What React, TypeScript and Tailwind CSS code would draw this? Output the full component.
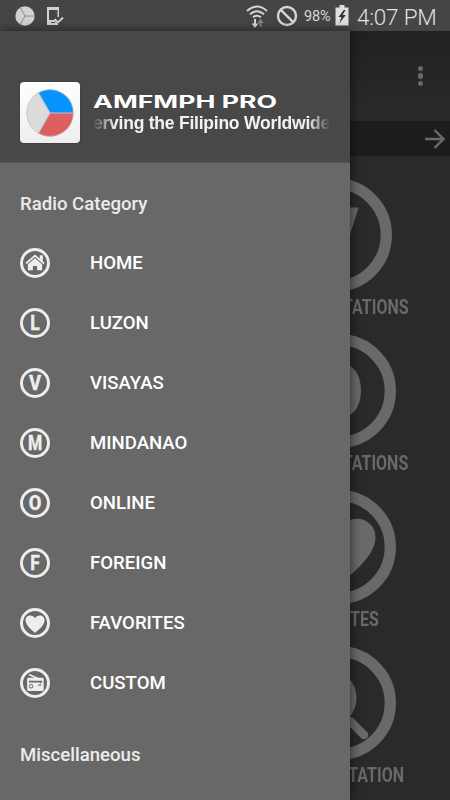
import React from 'react';

type IconName = 'home' | 'L' | 'V' | 'M' | 'O' | 'F' | 'heart' | 'radio' | 'search';

const categories: { label: string; icon: IconName }[] = [
  { label: 'HOME', icon: 'home' },
  { label: 'LUZON', icon: 'L' },
  { label: 'VISAYAS', icon: 'V' },
  { label: 'MINDANAO', icon: 'M' },
  { label: 'ONLINE', icon: 'O' },
  { label: 'FOREIGN', icon: 'F' },
  { label: 'FAVORITES', icon: 'heart' },
  { label: 'CUSTOM', icon: 'radio' },
];

const tiles: { label: string; icon: IconName; iconClass: string; labelClass: string }[] = [
  { label: 'VISAYAS STATIONS', icon: 'V', iconClass: 'mr-[58px]', labelClass: 'pr-[41px]' },
  { label: 'ONLINE STATIONS', icon: 'O', iconClass: 'mr-[54px]', labelClass: 'pr-[42px]' },
  { label: 'FAVORITES', icon: 'heart', iconClass: 'mr-[54px]', labelClass: 'pr-[71px]' },
  { label: 'FIND STATION', icon: 'search', iconClass: 'mr-[54px]', labelClass: 'pr-[46px]' },
];

const letterWidths: Record<string, number> = { L: 36, V: 46, M: 54, O: 48, F: 36 };

const Glyph: React.FC<{ name: IconName }> = ({ name }) => {
  if (name === 'home') {
    return (
      <g>
        <path d="M23 59 57 29 91 59" fill="none" stroke="currentColor" strokeWidth="7" />
        <path d="M75 28h12v24l-12-10z" />
        <path d="M57 39 84 62v23H65V68H49v17H30V62z" />
      </g>
    );
  }
  if (name === 'heart') {
    return (
      <path d="M57 95C50 88 21 68 21 47 21 36 29 28.700 39 28.700c8 0 14 4 18 10 4-6 10-10 18-10 10 0 18.500 7.300 18.500 18.300C93.500 68 64 88 57 95z" />
    );
  }
  if (name === 'radio') {
    return (
      <g>
        <path d="M34 25 68 40" stroke="currentColor" strokeWidth="6" />
        <path
          fillRule="evenodd"
          d="M32 37h53q5 0 5 5v40q0 5-5 5H32q-5 0-5-5V42q0-5 5-5zM34 48v7h43v4h4v-4h3v-7zM42 61a8.500 8.500 0 1 0 .1 0zM70 63v4h10v-4z"
        />
        <circle cx="42" cy="69.500" r="5" />
      </g>
    );
  }
  if (name === 'search') {
    return (
      <g fill="none" stroke="currentColor">
        <circle cx="45" cy="52" r="26" strokeWidth="7" />
        <path d="M68 75 82 89" strokeWidth="8.500" strokeLinecap="round" />
      </g>
    );
  }
  const width = letterWidths[name];
  return (
    <text
      x={57 - width / 2}
      y="83"
      fontSize="75"
      fontWeight="800"
      stroke="currentColor"
      strokeWidth="1"
      textLength={width}
      lengthAdjust="spacingAndGlyphs"
      className="font-['Roboto',sans-serif]"
    >
      {name}
    </text>
  );
};

const CircleIcon: React.FC<{ name: IconName; className: string }> = ({ name, className }) => (
  <svg viewBox="0 0 114 114" fill="currentColor" className={className}>
    <circle cx="57" cy="57" r="51.300" fill="none" stroke="currentColor" strokeWidth="11.300" />
    <Glyph name={name} />
  </svg>
);

const StatusBar: React.FC = () => (
  <header className="flex h-[31px] items-center bg-[#454545] pl-[15px] text-[#d6d6d6]">
    <svg viewBox="0 0 20 20" className="mt-px h-5 w-5">
      <circle cx="10" cy="10" r="9.700" fill="#d2d2d2" />
      <path d="M19.500 10H10L5.500 1.800M10 10 5.500 18.200" fill="none" stroke="#858585" strokeWidth="0.900" />
    </svg>
    <svg viewBox="0 0 18 20" className="ml-[11px] mt-px h-5 w-[18px]">
      <path
        fillRule="evenodd"
        fill="#d2d2d2"
        d="M1 1h12v10h-1.500V4H3v10h5l4 4v1H1zM5 16v1h4v-1z"
      />
      <path d="M8.500 13 12 16.500l5-5" fill="none" stroke="#d2d2d2" strokeWidth="1.800" />
    </svg>
    <div className="ml-auto flex items-center">
      <svg viewBox="0 0 22 24" className="h-6 w-[22px]" fill="none" stroke="#d6d6d6">
        <path d="M1 7Q11-2 21 7M4 10.300Q11 4 18 10.300M7 13.300Q11 10 15 13.300" strokeWidth="1.900" />
        <path d="M9 15v6" strokeWidth="2" />
        <path d="M5.500 19.500h7L9 24z" fill="#d6d6d6" stroke="none" />
        <path d="M13.600 22.500V19h-2l3-4.500 3 4.500h-2v3.500z" fill="#858585" stroke="none" />
      </svg>
      <svg viewBox="0 0 22 22" className="ml-[8px] h-[22px] w-[22px]" fill="none" stroke="#d6d6d6" strokeWidth="2.400">
        <circle cx="11" cy="11" r="9" />
        <path d="m4.800 4.800 12.400 12.400" />
      </svg>
      <span className="ml-[6px] mt-[2px] w-[28px] text-[14.500px] tracking-[-0.200px]">98%</span>
      <svg viewBox="0 0 14 21" className="ml-[3px] h-[21px] w-[14px]">
        <path d="M4.500 0h5v2.500H13.500V20.500H.5v-18h4z" fill="#dedede" />
        <path d="M8.800 5 3.500 12h3l-2.300 6.500L10.800 10H7.600l3-5z" fill="#333" />
      </svg>
      <span className="ml-[8px] mr-[12px] mt-[2px] w-[81px] whitespace-nowrap text-[22.500px] font-light leading-6 tracking-[-0.200px] text-[#e0e0e0]">
        4:07 PM
      </span>
    </div>
  </header>
);

const Drawer: React.FC = () => (
  <aside className="absolute bottom-0 left-0 top-[31px] w-[350px] bg-[#686868] shadow-[1px_0_10px_rgba(0,0,0,0.550)]">
    <div className="flex h-[132px] border-b border-[#555] bg-[#484848] pl-5 pt-[51px]">
      <div className="flex h-[61px] w-[60px] items-center justify-center rounded-[4px] bg-gradient-to-b from-white to-[#eeeeee] shadow-[0_0_1px_#111]">
        <svg viewBox="0 0 48 48" className="h-12 w-12">
          <circle cx="24" cy="24" r="23.300" fill="#dcdcdc" />
          <path d="M24 24 12.300 3.800A23.300 23.300 0 0 1 47.300 24z" fill="#0695ff" />
          <path d="M24 24 12.300 44.200A23.300 23.300 0 0 0 47.300 24z" fill="#de5f5f" />
          <path d="M47 24H24L12.300 3.800M24 24 12.300 44.200" fill="none" stroke="#c4c4c4" strokeWidth="1.100" />
          <circle cx="24" cy="24" r="23.300" fill="none" stroke="#bcbcbc" strokeWidth="0.700" />
        </svg>
      </div>
      <div className="ml-[13px] mt-[12px] w-[237px]">
        <svg viewBox="0 0 185 16" className="h-4 w-[185px] overflow-visible">
          <text
            x="0"
            y="14"
            fontSize="17"
            fontWeight="700"
            fill="#fff"
            textLength="184"
            lengthAdjust="spacingAndGlyphs"
            className="font-['Inter',sans-serif]"
          >
            AMFMPH PRO
          </text>
        </svg>
        <p className="h-6 whitespace-nowrap font-['Liberation_Sans',sans-serif] text-[17.500px] font-bold leading-[26px] tracking-[-0.230px] text-[#f2f2f2] [mask-image:linear-gradient(to_right,transparent,black_22px,black_215px,transparent)]">
          erving the Filipino Worldwide
        </p>
      </div>
    </div>
    <h2 className="mt-[29px] pl-5 text-[18.600px] font-medium leading-6 text-[#ececec]">Radio Category</h2>
    <nav className="mt-[16px]">
      {categories.map(({ label, icon }) => (
        <a key={label} href="#" className="flex h-[60px] items-center pl-5 text-[18.600px] font-medium text-white">
          <CircleIcon name={icon} className="mt-px h-[30px] w-[30px] text-[#eeeeee]" />
          <span className="ml-10 mt-[3px]">{label}</span>
        </a>
      ))}
    </nav>
    <h2 className="mt-[31px] pl-5 text-[18.600px] font-medium leading-6 text-[#ececec]">Miscellaneous</h2>
  </aside>
);

export default function App() {
  return (
    <div className="relative h-[800px] w-[450px] overflow-hidden bg-[#2a2a2a] font-['Roboto',sans-serif]">
      <StatusBar />
      <div className="flex h-[90px] items-center justify-end bg-gradient-to-b from-[#212121] to-[#2a2a2a] pr-[27px]">
        <div className="flex flex-col gap-[2px]">
          <i className="h-[5.500px] w-[5.500px] rounded-full bg-[#696969]" />
          <i className="h-[5.500px] w-[5.500px] rounded-full bg-[#696969]" />
          <i className="h-[5.500px] w-[5.500px] rounded-full bg-[#696969]" />
        </div>
      </div>
      <div className="flex h-[35px] items-center justify-end bg-[#1d1d1d] pr-[5px]">
        <svg viewBox="0 0 20 20" className="h-5 w-5" fill="none" stroke="#6b6b6b" strokeWidth="2.400">
          <path d="M0 10h18.500M9.500 1l9 9-9 9" />
        </svg>
      </div>
      <main className="flex flex-col pt-[22px]">
        {tiles.map(({ label, icon, iconClass, labelClass }) => (
          <div key={label} className="flex h-[156px] flex-col items-end text-[#696969]">
            <CircleIcon name={icon} className={`h-[114px] w-[114px] shrink-0 ${iconClass}`} />
            <div className={`mt-[3px] flex justify-end ${labelClass}`}>
              <span className="origin-right scale-x-[0.800] whitespace-nowrap text-[20px] font-bold leading-6">{label}</span>
            </div>
          </div>
        ))}
      </main>
      <Drawer />
    </div>
  );
}
